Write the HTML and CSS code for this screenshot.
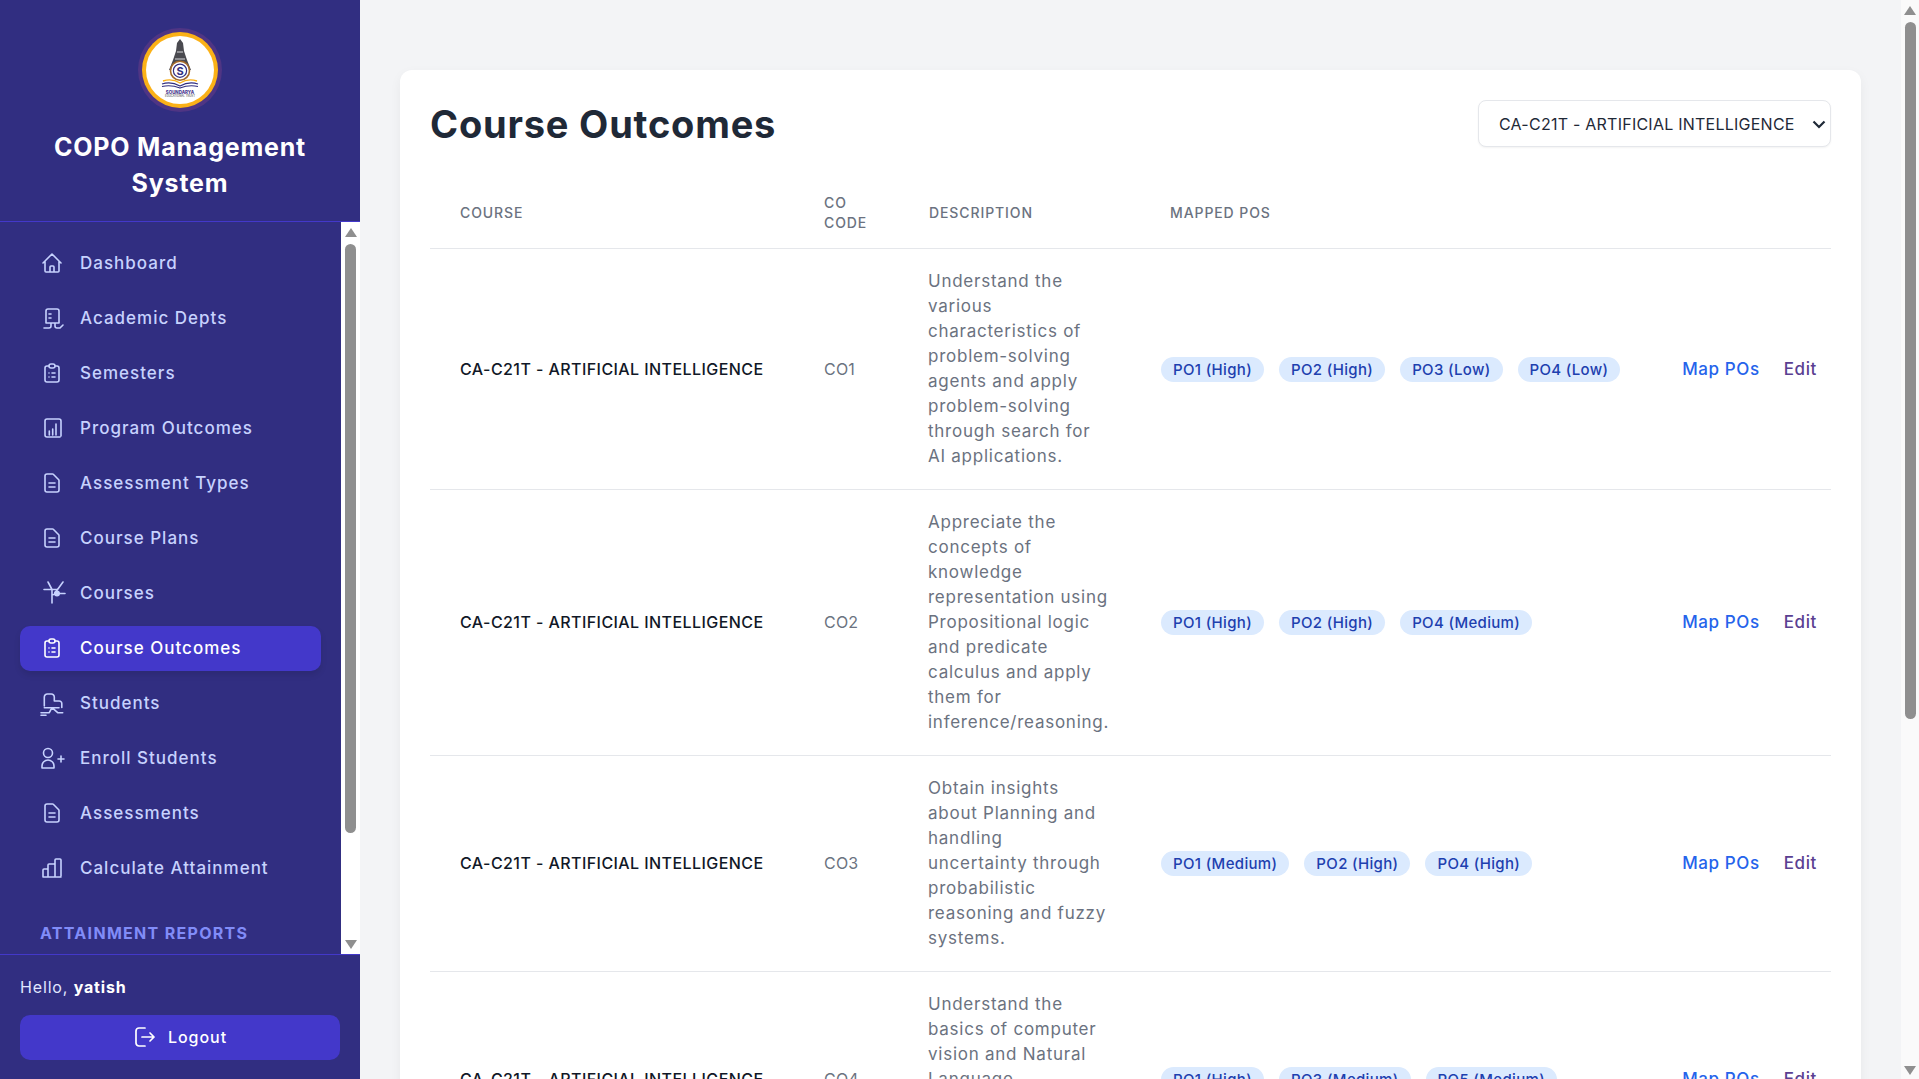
FILE: index.html
```html
<!DOCTYPE html>
<html lang="en">
<head>
<meta charset="utf-8">
<title>Course Outcomes</title>
<link rel="stylesheet" href="styles.css">
</head>
<body>
<div class="app">
  <aside class="sidebar">
    <header class="brand">
      <svg class="logo" viewBox="0 0 84 84">
        <circle cx="42" cy="42" r="42" fill="#4f3584"/>
        <circle cx="42" cy="42" r="38" fill="#fbb117"/>
        <circle cx="42" cy="42" r="34" fill="#fff"/>
        <path d="M42 11l3 4 1 8 3 9 4 10H31l4-10 3-9 1-8z" fill="#4a4a50"/>
        <path d="M39 24h6M37 31h10" stroke="#fff" stroke-width=".8"/>
        <circle cx="42" cy="42.700" r="9.500" fill="#fff" stroke="#a56a2a" stroke-width="1.600"/>
        <circle cx="42" cy="42.700" r="6.600" fill="#fff" stroke="#312e81" stroke-width="1.200"/>
        <text class="logo-s" x="42" y="46.500" text-anchor="middle">S</text>
        <path d="M25 53q9-3 17 2q8-5 17-2" fill="none" stroke="#fbb117" stroke-width="1.400"/>
        <path d="M24 56q9-3 18 2q9-5 18-2M24 58.500q9-2 18 1.500q9-3.500 18-1.500" fill="none" stroke="#312e81" stroke-width="1.200"/>
        <text class="logo-name" x="42" y="65.500" text-anchor="middle">SOUNDARYA</text>
        <text class="logo-sub" x="42" y="69" text-anchor="middle">EDUCATIONAL TRUST</text>
      </svg>
      <h1 class="brand-title">COPO Management<br>System</h1>
    </header>
    <div class="side-scroll">
      <nav class="nav">
        <a class="nav-item"><svg class="icon" viewBox="0 0 24 24"><path d="M3 12l2-2m0 0l7-7 7 7M5 10v10a1 1 0 001 1h3m10-11l2 2m-2-2v10a1 1 0 01-1 1h-3m-6 0a1 1 0 001-1v-4a1 1 0 011-1h2a1 1 0 011 1v4a1 1 0 001 1m-6 0h6"/></svg><span>Dashboard</span></a>
        <a class="nav-item"><svg class="icon" viewBox="0 0 24 24"><path d="M6 17V5a2 2 0 012-2h9a2 2 0 012 2v12H6zM4 22h5a2 2 0 002-2v-3M15 17v3a2 2 0 002 2h3l3-3M9 8h2M9 12h2"/></svg><span>Academic Depts</span></a>
        <a class="nav-item"><svg class="icon" viewBox="0 0 24 24"><path d="M9 5H7a2 2 0 00-2 2v12a2 2 0 002 2h10a2 2 0 002-2V7a2 2 0 00-2-2h-2M9 5a2 2 0 002 2h2a2 2 0 002-2M9 5a2 2 0 012-2h2a2 2 0 012 2m-3 7h3m-3 4h3m-6-4h.01M9 16h.01"/></svg><span>Semesters</span></a>
        <a class="nav-item"><svg class="icon" viewBox="0 0 24 24"><path d="M20 21H7a2 2 0 01-2-2V5a2 2 0 012-2h12a2 2 0 012 2v15M9.300 19v-4m3.400 4v-6M16 19V8"/></svg><span>Program Outcomes</span></a>
        <a class="nav-item"><svg class="icon" viewBox="0 0 24 24"><path d="M9 12h6m-6 4h6m2 5H7a2 2 0 01-2-2V5a2 2 0 012-2h5.586a1 1 0 01.707.293l5.414 5.414a1 1 0 01.293.707V19a2 2 0 01-2 2z"/></svg><span>Assessment Types</span></a>
        <a class="nav-item"><svg class="icon" viewBox="0 0 24 24"><path d="M9 12h6m-6 4h6m2 5H7a2 2 0 01-2-2V5a2 2 0 012-2h5.586a1 1 0 01.707.293l5.414 5.414a1 1 0 01.293.707V19a2 2 0 01-2 2z"/></svg><span>Course Plans</span></a>
        <a class="nav-item"><svg class="icon" viewBox="0 0 24 24"><path d="M4 8.500h13M8 1l4 7.500M23 1l-8 11M17 12.500h8M12 8.500V22M12 14l5-1.500"/><circle class="dot" cx="17" cy="12.500" r="2.200"/></svg><span>Courses</span></a>
        <a class="nav-item is-active"><svg class="icon" viewBox="0 0 24 24"><path d="M9 5H7a2 2 0 00-2 2v12a2 2 0 002 2h10a2 2 0 002-2V7a2 2 0 00-2-2h-2M9 5a2 2 0 002 2h2a2 2 0 002-2M9 5a2 2 0 012-2h2a2 2 0 012 2m-3 7h3m-3 4h3m-6-4h.01M9 16h.01"/></svg><span>Course Outcomes</span></a>
        <a class="nav-item"><svg class="icon" viewBox="0 0 24 24"><path d="M4.300 15V6a3 3 0 013-3h4a3 3 0 013 3v4h5a2.500 2.500 0 012.500 2.500v4M4.300 16.700H19M1 21.700h8.300l1.700-3.400h3l3.700 3.400h5M1 24.300h5"/></svg><span>Students</span></a>
        <a class="nav-item"><svg class="icon" viewBox="0 0 24 24"><circle cx="8" cy="7" r="4.500"/><path d="M2 22v-2a6 6 0 0112 0v2zM18 13h6m-3-3v6"/></svg><span>Enroll Students</span></a>
        <a class="nav-item"><svg class="icon" viewBox="0 0 24 24"><path d="M9 12h6m-6 4h6m2 5H7a2 2 0 01-2-2V5a2 2 0 012-2h5.586a1 1 0 01.707.293l5.414 5.414a1 1 0 01.293.707V19a2 2 0 01-2 2z"/></svg><span>Assessments</span></a>
        <a class="nav-item"><svg class="icon" viewBox="0 0 24 24"><path d="M3 21v-7a1 1 0 011-1h3a1 1 0 011 1v7zM8 21V9a1 1 0 011-1h5a1 1 0 011 1v12zM15 21V4a1 1 0 011-1h4a1 1 0 011 1v16a1 1 0 01-1 1zM3 21h18"/></svg><span>Calculate Attainment</span></a>
        <div class="nav-section">ATTAINMENT REPORTS</div>
      </nav>
      <div class="scrollbar scrollbar-side">
        <i class="arrow-up"></i>
        <i class="thumb thumb-side"></i>
        <i class="arrow-down"></i>
      </div>
    </div>
    <footer class="side-foot">
      <p class="hello">Hello, <strong>yatish</strong></p>
      <button class="logout"><svg class="logout-icon" viewBox="0 0 24 24"><path d="M17 16l4-4m0 0l-4-4m4 4H9M12 21H6a3 3 0 01-3-3V6a3 3 0 013-3h6"/></svg><span>Logout</span></button>
    </footer>
  </aside>

  <div class="main-wrap">
    <main class="main">
      <section class="card">
        <div class="card-head">
          <h2 class="page-title">Course Outcomes</h2>
          <div class="select"><span>CA-C21T - ARTIFICIAL INTELLIGENCE</span><svg class="chev" viewBox="0 0 20 20"><path d="M4.500 7.500l5.500 5.500 5.500-5.500"/></svg></div>
        </div>
        <table class="table">
          <colgroup><col class="c-course"><col class="c-code"><col class="c-desc"><col class="c-map"><col class="c-act"></colgroup>
          <thead>
            <tr><th>Course</th><th>CO<br>Code</th><th>Description</th><th>Mapped POs</th><th></th></tr>
          </thead>
          <tbody>
            <tr>
              <td class="course">CA-C21T - ARTIFICIAL INTELLIGENCE</td>
              <td class="code">CO1</td>
              <td class="desc">Understand the<br>various<br>characteristics of<br>problem-solving<br>agents and apply<br>problem-solving<br>through search for<br>AI applications.</td>
              <td class="map"><div class="pills"><span class="pill">PO1 (High)</span><span class="pill">PO2 (High)</span><span class="pill">PO3 (Low)</span><span class="pill">PO4 (Low)</span></div></td>
              <td class="act"><a class="link-map">Map POs</a><a class="link-edit">Edit</a></td>
            </tr>
            <tr>
              <td class="course">CA-C21T - ARTIFICIAL INTELLIGENCE</td>
              <td class="code">CO2</td>
              <td class="desc">Appreciate the<br>concepts of<br>knowledge<br>representation using<br>Propositional logic<br>and predicate<br>calculus and apply<br>them for<br>inference/reasoning.</td>
              <td class="map"><div class="pills"><span class="pill">PO1 (High)</span><span class="pill">PO2 (High)</span><span class="pill">PO4 (Medium)</span></div></td>
              <td class="act"><a class="link-map">Map POs</a><a class="link-edit">Edit</a></td>
            </tr>
            <tr>
              <td class="course">CA-C21T - ARTIFICIAL INTELLIGENCE</td>
              <td class="code">CO3</td>
              <td class="desc">Obtain insights<br>about Planning and<br>handling<br>uncertainty through<br>probabilistic<br>reasoning and fuzzy<br>systems.</td>
              <td class="map"><div class="pills"><span class="pill">PO1 (Medium)</span><span class="pill">PO2 (High)</span><span class="pill">PO4 (High)</span></div></td>
              <td class="act"><a class="link-map">Map POs</a><a class="link-edit">Edit</a></td>
            </tr>
            <tr>
              <td class="course">CA-C21T - ARTIFICIAL INTELLIGENCE</td>
              <td class="code">CO4</td>
              <td class="desc">Understand the<br>basics of computer<br>vision and Natural<br>Language<br>Processing for AI<br>applications and<br>solutions.</td>
              <td class="map"><div class="pills"><span class="pill">PO1 (High)</span><span class="pill">PO3 (Medium)</span><span class="pill">PO5 (Medium)</span></div></td>
              <td class="act"><a class="link-map">Map POs</a><a class="link-edit">Edit</a></td>
            </tr>
          </tbody>
        </table>
      </section>
    </main>
    <div class="scrollbar scrollbar-main">
      <i class="arrow-up"></i>
      <i class="thumb thumb-main"></i>
      <i class="arrow-down"></i>
    </div>
  </div>
</div>
</body>
</html>
```
FILE: styles.css
```css
* { box-sizing: border-box; }
html, body { height: 100%; margin: 0; overflow: hidden; }
body { font-family: Inter, "Noto Sans", sans-serif; background: #f3f4f6; color: #1f2937; }
.app { display: flex; height: 100vh; }

.sidebar { flex: 0 0 360px; display: flex; flex-direction: column; background: #312e81; }
.brand { height: 222px; padding-top: 28px; display: flex; flex-direction: column; align-items: center; border-bottom: 1px solid #4338ca; flex: none; }
.logo { width: 84px; height: 84px; flex: none; }
.logo-s { font: 700 11px Inter, sans-serif; fill: #312e81; }
.logo-name { font: 800 4.4px Inter, sans-serif; fill: #4b3a8f; }
.logo-sub { font: 500 2.8px Inter, sans-serif; fill: #55555c; }
.brand-title { margin: 17px 0 0; font-size: 25px; line-height: 36px; font-weight: 700; text-align: center; color: #fff; letter-spacing: .8px; }

.side-scroll { flex: 1; min-height: 0; display: flex; overflow: hidden; }
.nav { flex: 1; min-width: 0; padding: 19px 20px 0; display: flex; flex-direction: column; gap: 10px; overflow: hidden; }
.nav-item { flex: none; height: 45px; padding: 0 0 2px 20px; display: flex; align-items: center; gap: 16px; border-radius: 10px; color: #c7d2fe; font-size: 17px; font-weight: 500; letter-spacing: 1px; white-space: nowrap; }
.nav-item.is-active { background: #4338ca; color: #fff; box-shadow: 0 4px 6px rgba(0,0,0,.1); }
.icon { width: 24px; height: 24px; flex: none; fill: none; stroke: currentColor; stroke-width: 1.6; stroke-linecap: round; stroke-linejoin: round; overflow: visible; }
.icon .dot { fill: currentColor; }
.nav-section { margin-top: 22px; padding-left: 20px; color: #818cf8; font-size: 16px; font-weight: 700; letter-spacing: 1.3px; white-space: nowrap; }

.scrollbar { flex: none; display: flex; flex-direction: column; align-items: center; position: relative; }
.scrollbar-side { width: 19px; background: #fff; padding: 6px 0 5px; }
.scrollbar-main { width: 18px; background: #fafafa; padding: 6px 0 4px; }
.thumb { display: block; width: 11px; background: #8f8f8f; border-radius: 6px; }
.thumb-side { height: 589px; margin-top: 6.500px; }
.thumb-main { height: 697px; margin-top: 7px; }
.arrow-up, .arrow-down { display: block; width: 0; height: 0; border-left: 6.500px solid transparent; border-right: 6.500px solid transparent; flex: none; }
.arrow-up { border-bottom: 9.500px solid #8f8f8f; }
.arrow-down { border-top: 9.500px solid #8f8f8f; margin-top: auto; }

.side-foot { flex: none; height: 125px; padding: 20px 20px 0; border-top: 1px solid #4338ca; }
.hello { margin: 0; font-size: 16px; line-height: 24px; color: #e0e7ff; letter-spacing: .85px; }
.hello strong { color: #fff; font-weight: 700; }
.logout { margin-top: 16px; width: 100%; height: 45px; padding: 0 0 2px; display: flex; align-items: center; justify-content: center; gap: 11px; border: 0; border-radius: 10px; background: #4338ca; color: #fff; font: 500 16px Inter, sans-serif; letter-spacing: .95px; }
.logout-icon { width: 24px; height: 24px; fill: none; stroke: currentColor; stroke-width: 1.7; stroke-linecap: round; stroke-linejoin: round; }

.main-wrap { flex: 1; min-width: 0; display: flex; }
.main { flex: 1; min-width: 0; padding: 70px 40px 0; overflow: hidden; }
.card { background: #fff; border-radius: 12px; padding: 30px; box-shadow: 0 4px 12px rgba(0,0,0,.05); }
.card-head { display: flex; justify-content: space-between; align-items: center; margin-bottom: 31px; }
.page-title { margin: 0; padding-top: 2px; font-size: 38px; line-height: 45px; font-weight: 700; color: #1f2937; letter-spacing: .8px; }
.select { width: 353px; height: 47px; padding: 0 1px 0 20px; display: flex; align-items: center; justify-content: space-between; border: 1px solid #e5e7eb; border-radius: 8px; background: #fff; box-shadow: 0 1px 2px rgba(0,0,0,.05); font-size: 16px; color: #1f2937; white-space: nowrap; letter-spacing: .24px; }
.chev { width: 20px; height: 20px; flex: none; fill: none; stroke: #1f2937; stroke-width: 2.2; }

.table { width: 1401px; border-collapse: collapse; table-layout: fixed; }
.c-course { width: 370px; }
.c-code { width: 105px; }
.c-desc { width: 241px; }
.c-map { width: 516px; }
.c-act { width: 169px; }
th { padding: 15px 0 15px 24px; border-bottom: 1px solid #e5e7eb; text-align: left; font-size: 14px; line-height: 20px; font-weight: 500; color: #6b7280; text-transform: uppercase; letter-spacing: .9px; }
th:first-child { padding-left: 30px; }
td { padding: 20px 0 20px 24px; border-bottom: 1px solid #e5e7eb; font-size: 16px; line-height: 25px; vertical-align: middle; letter-spacing: .2px; }
td.course { padding-left: 30px; color: #111827; font-weight: 500; white-space: nowrap; letter-spacing: .43px; }
.code, .desc { color: #6b7280; }
td.desc { padding-left: 23px; font-size: 17px; white-space: nowrap; letter-spacing: .75px; }
td.map { padding-left: 15px; }
.pills { display: flex; gap: 15px; }
.pill { height: 25px; padding: 0 12px; display: flex; align-items: center; border-radius: 13px; background: #dbeafe; color: #1e40af; font-size: 15px; font-weight: 500; white-space: nowrap; letter-spacing: .33px; }
td.act { padding: 20px 14px 20px 0; text-align: right; white-space: nowrap; font-size: 17px; font-weight: 500; letter-spacing: .6px; }
.link-map { color: #2563eb; }
.link-edit { color: #5b3f92; margin-left: 24px; }
```
